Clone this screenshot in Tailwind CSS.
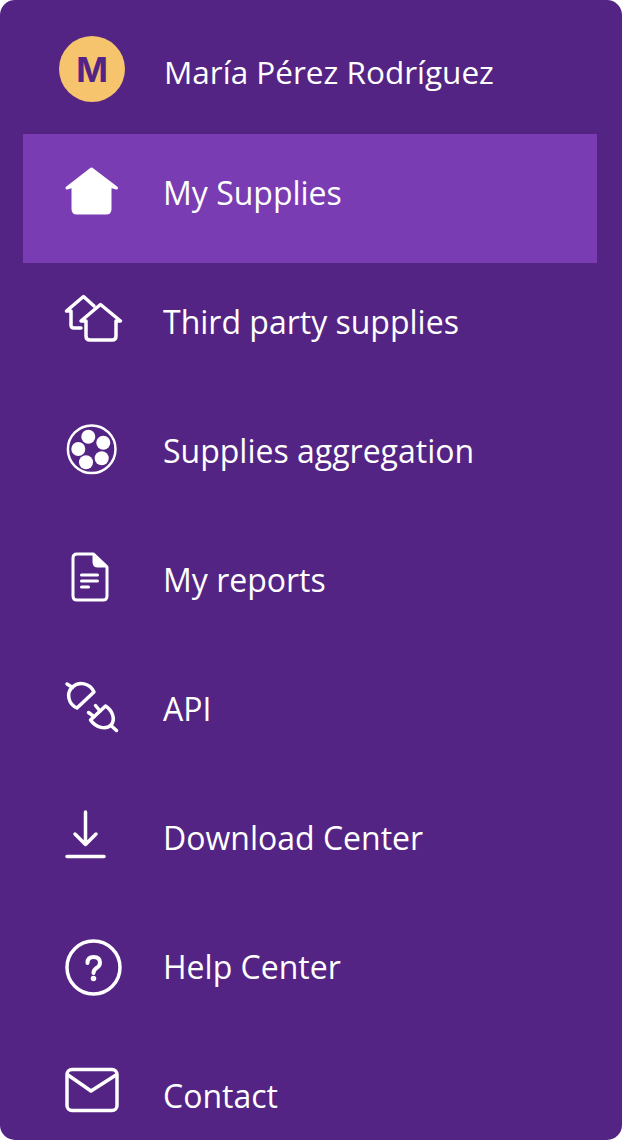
<!DOCTYPE html>
<html lang="en">
<head>
    <meta charset="UTF-8">
    <title>Menu</title>
    <script src="https://cdn.jsdelivr.net/npm/@tailwindcss/browser@4"></script>
</head>
<body class="bg-white">
    <nav class="w-[622px] h-[1140px] overflow-hidden rounded-[15px] bg-[#542484] text-white font-['Open_Sans',sans-serif] text-[32px]">
        <!-- user -->
        <div class="h-[134px] pl-[59px] pt-[36px] flex items-start">
            <div class="w-[66px] h-[66px] rounded-full bg-[#f5c46d] flex items-center justify-center text-[#542484] text-[34px] font-bold font-['Inter',sans-serif]">M</div>
            <span class="ml-[39px] mt-[11px] leading-[50px] text-[31.5px]">María Pérez Rodríguez</span>
        </div>

        <ul class="ml-[23px] w-[574px]">
            <li class="h-[129px] pl-[36px] pt-[23px] flex items-start bg-[#7a3cb2]">
                <svg class="w-[66px] h-[66px] shrink-0" viewBox="59 157 66 66" fill="#fff" stroke="#fff" stroke-width="3" stroke-linecap="round" stroke-linejoin="round">
                    <path d="M67 188 L91.500 169 L116.500 188 L110 186 V209 Q110 213 106 213 H77 Q73 213 73 209 V186 Z"/>
                </svg>
                <span class="ml-[38px] mt-[11px] leading-[50px]">My Supplies</span>
            </li>
            <li class="h-[129px] pl-[36px] pt-[23px] flex items-start">
                <svg class="w-[66px] h-[66px] shrink-0" viewBox="59 286 66 66" fill="none" stroke="#fff" stroke-width="3.500" stroke-linecap="round" stroke-linejoin="round">
                    <path d="M94 306 L83.500 296.500 L66.500 311 H71 V325 Q71 328 74 328 H81"/>
                    <path d="M81 321 L100.500 304.500 L120.500 321 H116 V336 Q116 340 112 340 H90 Q86 340 86 336 V321 Z"/>
                </svg>
                <span class="ml-[38px] mt-[11px] leading-[50px]">Third party supplies</span>
            </li>
            <li class="h-[129px] pl-[36px] pt-[23px] flex items-start">
                <svg class="w-[66px] h-[66px] shrink-0" viewBox="59 415 66 66" fill="#fff">
                    <circle cx="91.700" cy="449.300" r="23.800" fill="none" stroke="#fff" stroke-width="2.500"/>
                    <circle cx="88.300" cy="436.700" r="7"/>
                    <circle cx="103.300" cy="442.700" r="7"/>
                    <circle cx="78.300" cy="449" r="7"/>
                    <circle cx="101.700" cy="458.300" r="7"/>
                    <circle cx="86" cy="462.300" r="7"/>
                </svg>
                <span class="ml-[38px] mt-[11px] leading-[50px]">Supplies aggregation</span>
            </li>
            <li class="h-[129px] pl-[36px] pt-[23px] flex items-start">
                <svg class="w-[66px] h-[66px] shrink-0" viewBox="59 544 66 66" fill="none" stroke="#fff" stroke-width="3" stroke-linecap="round" stroke-linejoin="round">
                    <path d="M93.500 554 H77 Q73 554 73 558 V596 Q73 600 77 600 H103 Q107 600 107 596 V567 Z"/>
                    <path d="M94 555 V562 Q94 566 98 566 H106 Z" fill="#fff"/>
                    <path d="M81.500 575 H97.500 M81.500 581 H97.500 M81.500 587 H88.500"/>
                </svg>
                <span class="ml-[38px] mt-[11px] leading-[50px]">My reports</span>
            </li>
            <li class="h-[129px] pl-[36px] pt-[23px] flex items-start">
                <svg class="w-[66px] h-[66px] shrink-0" viewBox="59 673 66 66" fill="none" stroke="#fff" stroke-width="3.500" stroke-linecap="round" stroke-linejoin="round">
                    <path d="M67 684 L72.500 687.500"/>
                    <path d="M94 692 L77 708 C68 704 66 693 72.500 687 C79 681 90 683 94 692 Z"/>
                    <path d="M105.500 706 L90.500 720 C96 728 106 730 111 725 C116 719 112 710 105.500 706 Z"/>
                    <path d="M100 711 L95.500 705.500 M94 716.700 L88.500 712.500 M111.500 726 L116.500 730.500"/>
                </svg>
                <span class="ml-[38px] mt-[11px] leading-[50px]">API</span>
            </li>
            <li class="h-[129px] pl-[36px] pt-[23px] flex items-start">
                <svg class="w-[66px] h-[66px] shrink-0" viewBox="59 802 66 66" fill="none" stroke="#fff" stroke-width="3.500" stroke-linecap="round" stroke-linejoin="round">
                    <path d="M85.500 812 V844 M75 834 L85.500 844.500 L96 834 M67 856.500 H104"/>
                </svg>
                <span class="ml-[38px] mt-[11px] leading-[50px]">Download Center</span>
            </li>
            <li class="h-[129px] pl-[36px] pt-[23px] flex items-start">
                <svg class="w-[66px] h-[66px] shrink-0" viewBox="59 931 66 66" fill="none" stroke="#fff" stroke-width="3.500" stroke-linecap="round" stroke-linejoin="round">
                    <circle cx="93.500" cy="967.500" r="26.500"/>
                    <path d="M87.500 963 Q87.500 957 93.500 957 Q100 957 100 962.500 Q100 966 96.500 968 Q93.500 970 93.500 973" stroke-width="4"/>
                    <circle cx="93.500" cy="978.500" r="1" fill="#fff"/>
                </svg>
                <span class="ml-[38px] mt-[11px] leading-[50px]">Help Center</span>
            </li>
            <li class="h-[129px] pl-[36px] pt-[23px] flex items-start">
                <svg class="w-[66px] h-[66px] shrink-0" viewBox="59 1060 66 66" fill="none" stroke="#fff" stroke-width="3.500" stroke-linecap="round" stroke-linejoin="round">
                    <rect x="67" y="1069.500" width="50" height="41" rx="5"/>
                    <path d="M68 1075 L91 1091 L116 1075"/>
                </svg>
                <span class="ml-[38px] mt-[11px] leading-[50px]">Contact</span>
            </li>
        </ul>
    </nav>
</body>
</html>
